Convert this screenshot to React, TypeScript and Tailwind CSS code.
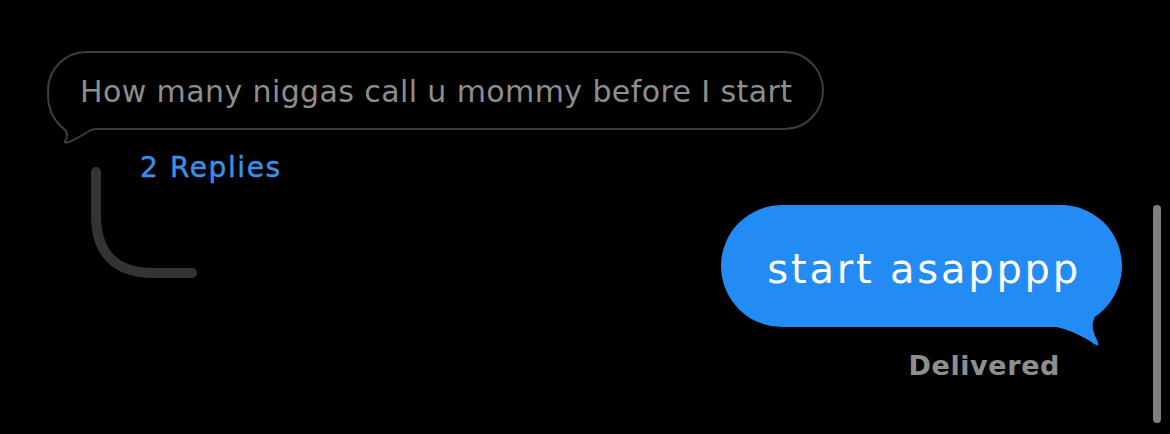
import React from "react";

export default function App() {
  return (
    <div className="relative h-[434px] w-[1170px] overflow-hidden bg-black font-['DejaVu_Sans','Noto_Sans',sans-serif]">
      <div className="flex flex-col">
        {/* received bubble (outline) */}
        <div className="ml-[47px] mt-[51px] flex">
          <div className="relative flex h-[79px] items-start rounded-full border-2 border-[#3e3e3e] pl-[31px] pr-[30px] pt-[24px] text-[30px] tracking-[0.4px] text-[#8d8d8d]">
            <span className="leading-[30px]">How many niggas call u mommy before I start</span>
            <svg
              className="pointer-events-none absolute left-[-9px] top-[37px] overflow-visible"
              width="70"
              height="60"
              viewBox="0 0 70 60"
            >
              <path
                d="M8 5 C8 18 13 30 24 39 C28 42 28 47 25 51 Q24 53 27 52.5 C34 51 42 45 50 40.5 C52 39.5 54 39 57 39 L57 30 Z"
                fill="#000"
              />
              <path
                d="M8 5 C8 18 13 30 24 39 C28 42 28 47 25 51 Q24 53 27 52.5 C34 51 42 45 50 40.5 C52 39.5 54 39 57 39"
                fill="none"
                stroke="#3e3e3e"
                strokeWidth="2"
              />
            </svg>
          </div>
        </div>

        {/* replies */}
        <div className="relative ml-[140px] mt-[24px] flex h-[28px]">
          <span className="text-[28px] leading-[28px] tracking-[1.6px] text-[#3a8fe8] [-webkit-text-stroke:0.5px_#3a8fe8]">2 Replies</span>
          <svg
            className="pointer-events-none absolute left-[-56px] top-[8px] overflow-visible"
            width="110"
            height="120"
            viewBox="0 0 110 120"
          >
            <path
              d="M12 10 L12 53 Q12 111 70 111 L108 111"
              fill="none"
              stroke="#333333"
              strokeWidth="10"
              strokeLinecap="round"
            />
          </svg>
        </div>

        {/* sent bubble */}
        <div className="mt-[23px] flex justify-end pr-[48px]">
          <div className="relative flex h-[122px] items-center rounded-full bg-[#238cf4] pl-[46px] pr-[41px] pt-[6px] text-[40px] tracking-[2.8px] text-white">
            <span className="leading-[40px]">start asapppp</span>
            <svg
              className="pointer-events-none absolute right-0 bottom-[-20px] overflow-visible"
              width="80"
              height="50"
              viewBox="0 0 80 50"
            >
              <path
                d="M8 29 C24 31 38 38 48 44 C51 46 53 47.5 55.5 48.5 C57 48.5 56.5 46 54 41 C51 35 50 29 51 25 C51.5 23 52 22 53 21 L18 3 Z"
                fill="#238cf4"
              />
            </svg>
          </div>
        </div>

        {/* delivered */}
        <div className="mt-[25px] flex justify-end pr-[110px]">
          <span className="text-[27px] font-bold leading-[27px] tracking-[0.6px] text-[#8e8e8e]">Delivered</span>
        </div>
      </div>

      {/* scrollbar */}
      <div className="absolute right-[9px] top-[205px] h-[218px] w-[8px] rounded-full bg-[#7e7e7e]" />
    </div>
  );
}
